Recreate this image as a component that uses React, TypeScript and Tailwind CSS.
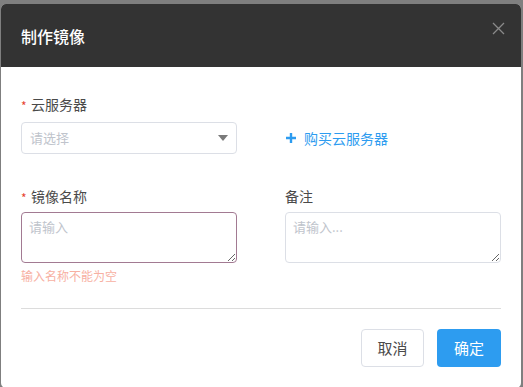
import React from "react";

const font = { fontFamily: '"Noto Sans CJK SC", "Noto Sans", sans-serif' };

const Label: React.FC<{ text: string; required?: boolean }> = ({ text, required }) => (
  <div className="flex items-center h-[20px] text-[14px] text-[#4a4a4a]">
    {required && <span className="text-[#e6432f] text-[12px] w-[10px] mt-[3px]">*</span>}
    <span>{text}</span>
  </div>
);

export default function App() {
  return (
    <div className="w-[523px] h-[387px] bg-[#7f7f7f] overflow-hidden pt-[4px] pl-[1px]" style={font}>
      <div className="w-[520px] h-[384px] bg-white rounded-[5px] overflow-hidden flex flex-col">
        {/* Header */}
        <div className="h-[63px] bg-[#333333] flex justify-between pl-[20px] pr-[16px]">
          <h2 className="self-center text-[16px] text-white font-medium">制作镜像</h2>
          <button className="self-start mt-[18px] text-[#8a8a8a]">
            <svg width="13" height="13" viewBox="0 0 13 13" stroke="currentColor" strokeWidth="1.3">
              <path d="M1 1 L12 12 M12 1 L1 12" />
            </svg>
          </button>
        </div>

        {/* Body */}
        <div className="px-[20px] pt-[27px]">
          <div className="grid grid-cols-2 gap-x-[48px]">
            <div>
              <Label text="云服务器" required />
              <div className="mt-[8px] h-[32px] border border-[#dcdfe6] rounded-[4px] flex items-center justify-between pl-[8px] pr-[8px]">
                <span className="text-[13px] text-[#c0c4cc]">请选择</span>
                <svg width="10" height="6" viewBox="0 0 10 6" className="mt-[-1px]">
                  <path d="M0 0 L10 0 L5 6 Z" fill="#7a7a7a" />
                </svg>
              </div>
            </div>
            <div className="self-end h-[32px] flex items-center">
              <a className="flex items-center text-[14px] text-[#2d9cf0] cursor-pointer">
                <svg width="10" height="10" viewBox="0 0 10 10" className="ml-[1px] mr-[8px]" stroke="currentColor" strokeWidth="2.4">
                  <path d="M5 0 V10 M0 5 H10" />
                </svg>
                购买云服务器
              </a>
            </div>
          </div>

          <div className="grid grid-cols-2 gap-x-[48px] mt-[32px]">
            <div>
              <Label text="镜像名称" required />
              <textarea
                placeholder="请输入"
                className="block mt-[6px] w-full h-[51px] border border-[#a27a92] rounded-[4px] px-[7px] py-[4px] text-[13px] leading-[20px] text-[#4a4a4a] placeholder:text-[#c0c4cc] outline-none"
              />
              <div className="mt-[5px] text-[12px] leading-[16px] text-[#f7b0a2]">输入名称不能为空</div>
            </div>
            <div>
              <Label text="备注" />
              <textarea
                placeholder="请输入..."
                className="block mt-[6px] w-full h-[51px] border border-[#dcdfe6] rounded-[4px] px-[7px] py-[4px] text-[13px] leading-[20px] text-[#4a4a4a] placeholder:text-[#c0c4cc] outline-none"
              />
            </div>
          </div>

          <div className="mt-[24px] h-px bg-[#dcdcdc]" />

          <div className="mt-[20px] flex justify-end gap-[13px]">
            <button className="w-[63px] h-[38px] border border-[#dcdfe6] rounded-[4px] text-[15px] text-[#4a4a4a] bg-white">
              取消
            </button>
            <button className="w-[64px] h-[38px] rounded-[4px] text-[15px] text-white bg-[#2d9cf0]">
              确定
            </button>
          </div>
        </div>
      </div>
    </div>
  );
}
